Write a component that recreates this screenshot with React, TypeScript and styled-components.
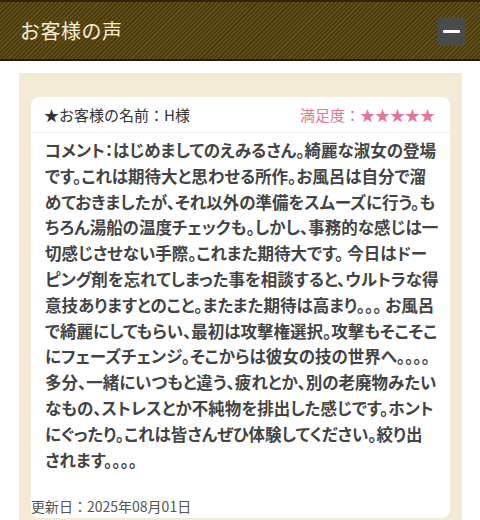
import React from "react";
import styled, { createGlobalStyle } from "styled-components";

const Global = createGlobalStyle`
  html, body { margin: 0; padding: 0; background: #fff; }
  body { font-family: "Noto Sans CJK JP", "Noto Sans", sans-serif; }
`;

const Page = styled.div`
  width: 480px;
  height: 520px;
  overflow: hidden;
  background: #fff;
`;

const Header = styled.header`
  height: 57px;
  border-top: 2px solid #3a200a;
  border-bottom: 2px solid #2e1a08;
  background-color: #5a4811;
  background-image: repeating-linear-gradient(
    -45deg,
    #62501a 0px,
    #62501a 1.5px,
    #4a3a0b 1.5px,
    #4a3a0b 3px
  );
  display: flex;
  align-items: center;
  justify-content: space-between;
  padding: 0 14px 0 20px;
`;

const Title = styled.h2`
  margin: 0;
  font-size: 20px;
  font-weight: 400;
  color: #f4ecd4;
  letter-spacing: 0.5px;
`;

const ToggleButton = styled.button`
  width: 29px;
  height: 29px;
  border: none;
  border-radius: 5px;
  background: #4a4a4c;
  display: flex;
  align-items: center;
  justify-content: center;
  padding: 0;
  margin-top: 1px;
  &::after {
    content: "";
    width: 17px;
    height: 3px;
    background: #fff;
    border-radius: 1px;
  }
`;

const Outer = styled.section`
  margin: 12px 18px 0 19px;
  background: #f3ebd6;
  padding: 24px 12px 0 12px;
  min-height: 460px;
`;

const Card = styled.article`
  background: #fff;
  border-radius: 8px;
  overflow: hidden;
`;

const CardHead = styled.div`
  display: flex;
  justify-content: space-between;
  align-items: center;
  height: 35px;
  padding: 0 15px 0 13px;
  border-bottom: 1px solid #efefef;
  font-size: 15px;
  color: #333;
`;

const Rating = styled.span`
  color: #e57399;
`;

const Comment = styled.p`
  margin: 0;
  padding: 5px 10px 23px 14px;
  font-size: 16.5px;
  line-height: 25.8px;
  font-weight: 700;
  color: #444;
  font-feature-settings: "palt";
  white-space: nowrap;
`;

const Updated = styled.div`
  font-size: 14px;
  color: #555;
  padding: 0 0 2px 0;
  line-height: 20px;
`;

const lines = [
  "コメント：はじめましてのえみるさん。綺麗な淑女の登場",
  "です。これは期待大と思わせる所作。お風呂は自分で溜",
  "めておきましたが、それ以外の準備をスムーズに行う。も",
  "ちろん湯船の温度チェックも。しかし、事務的な感じは一",
  "切感じさせない手際。これまた期待大です。 今日はドー",
  "ピング剤を忘れてしまった事を相談すると、ウルトラな得",
  "意技ありますとのこと。またまた期待は高まり。。。 お風呂",
  "で綺麗にしてもらい、最初は攻撃権選択。攻撃もそこそこ",
  "にフェーズチェンジ。そこからは彼女の技の世界へ。。。。",
  "多分、一緒にいつもと違う、疲れとか、別の老廃物みたい",
  "なもの、ストレスとか不純物を排出した感じです。ホント",
  "にぐったり。これは皆さんぜひ体験してください。絞り出",
  "されます。。。。",
];

export default function App() {
  return (
    <Page>
      <Global />
      <Header>
        <Title>お客様の声</Title>
        <ToggleButton aria-label="閉じる" />
      </Header>
      <Outer>
        <Card>
          <CardHead>
            <span>★お客様の名前：H様</span>
            <Rating>満足度：★★★★★</Rating>
          </CardHead>
          <Comment>
            {lines.map((l, i) => (
              <React.Fragment key={i}>
                {l}
                {i < lines.length - 1 && <br />}
              </React.Fragment>
            ))}
          </Comment>
          <Updated>更新日：2025年08月01日</Updated>
        </Card>
      </Outer>
    </Page>
  );
}
